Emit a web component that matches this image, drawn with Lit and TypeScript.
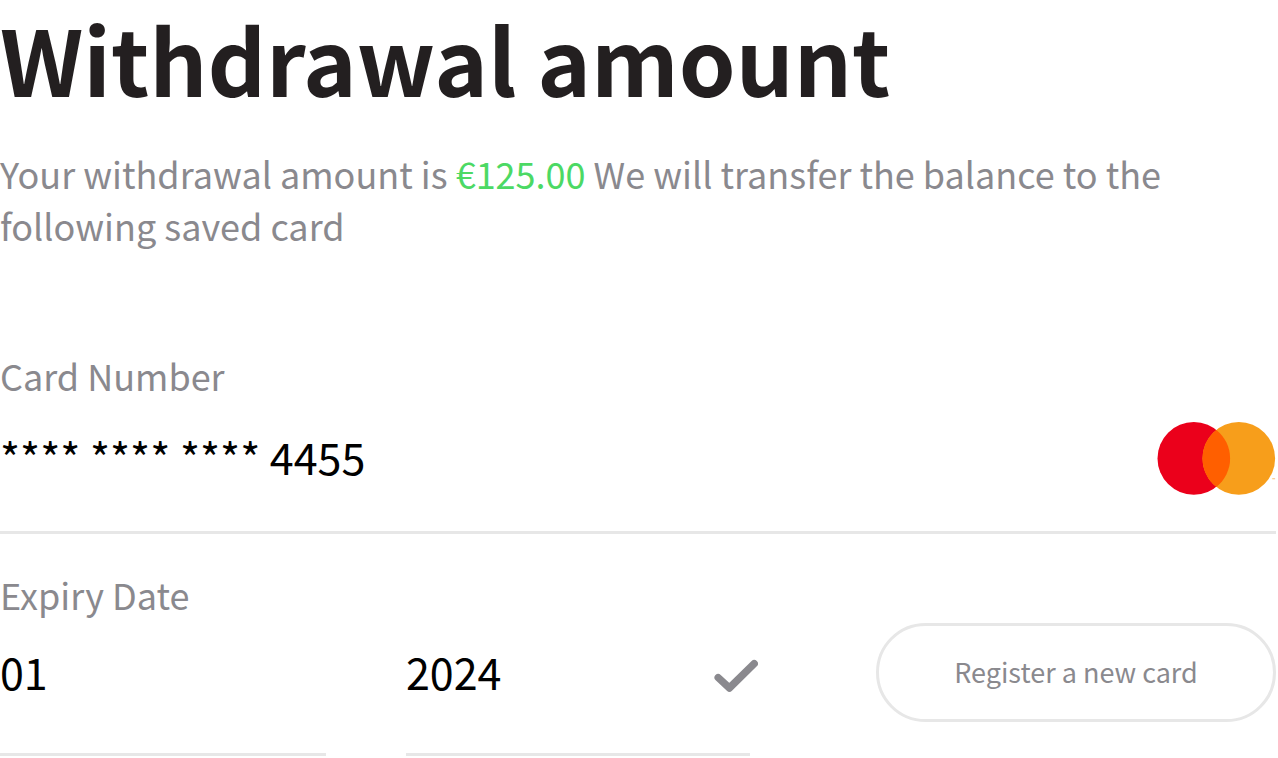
import { LitElement, html, css } from "lit";
import { customElement } from "lit/decorators.js";

@customElement("app-root")
export class AppRoot extends LitElement {
  static styles = css`
    :host {
      display: block;
      box-sizing: border-box;
      padding-right: 2px;
      background: #fff;
      color: #000;
      font-family: "Noto Sans CJK SC", "Noto Sans", sans-serif;
    }
    * { box-sizing: border-box; }
    h1 { margin: 0; font-size: 91px; line-height: 114px; font-weight: 700; color: #231f20; }
    p { margin: 33px 0 0; font-size: 36px; line-height: 52px; color: #8a898e; }
    .amount { color: #4cd964; }
    .label { display: block; font-size: 36px; line-height: 52px; color: #8a898e; }
    .row { display: flex; align-items: center; border-bottom: 3px solid #e7e7e7; }
    input {
      display: block;
      flex: 1;
      min-width: 0;
      height: 64px;
      margin: 0;
      padding: 0;
      border: 0;
      outline: 0;
      background: none;
      color: inherit;
      font-family: inherit;
      font-size: 43px;
      line-height: 64px;
    }
    .number { margin-top: 98px; }
    .number .row { height: 133px; padding-bottom: 20px; }
    .logo { flex: none; width: 120px; height: 80px; }
    .mark { font-size: 4px; fill: #f79e1b; }
    .bottom { display: flex; align-items: flex-start; gap: 126px; margin-top: 34px; }
    .expiry { flex: 1; min-width: 0; }
    .fields { display: grid; grid-template-columns: minmax(0, 326fr) minmax(0, 344fr); gap: 80px; }
    .field { height: 136px; padding-bottom: 31px; }
    .check { flex: none; width: 44px; height: 44px; margin-right: -8px; }
    button {
      flex: none;
      margin: 55px 0 0;
      padding: 0 0 2px;
      width: 400px;
      height: 99px;
      border: 3px solid #e7e7e7;
      border-radius: 50px;
      background: #fff;
      color: #8a898e;
      font-family: inherit;
      font-size: 27px;
      line-height: 40px;
    }
  `;

  render() {
    return html`
      <main>
        <h1>Withdrawal amount</h1>
        <p>Your withdrawal amount is <span class="amount">€125.00</span> We will transfer the balance to the following saved card</p>
        <div class="number">
          <label class="label" for="card">Card Number</label>
          <div class="row">
            <input id="card" value="**** **** **** 4455" readonly />
            <svg class="logo" viewBox="0 0 120 80" role="img" aria-label="Mastercard">
              <circle cx="37.8" cy="42.4" r="36.3" fill="#eb001b" />
              <circle cx="82.8" cy="42.4" r="36.3" fill="#f79e1b" />
              <path d="M60.3 13.9A36.3 36.3 0 0 1 60.3 70.9A36.3 36.3 0 0 1 60.3 13.9Z" fill="#ff5f00" />
              <text class="mark" x="119" y="65" text-anchor="end">™</text>
            </svg>
          </div>
        </div>
        <div class="bottom">
          <div class="expiry">
            <label class="label" for="month">Expiry Date</label>
            <div class="fields">
              <div class="row field"><input id="month" value="01" readonly /></div>
              <div class="row field">
                <input aria-label="Expiry year" value="2024" readonly />
                <svg class="check" viewBox="0 0 44 44" aria-hidden="true">
                  <path d="M4.2 28.6L15.4 39L40.2 14.6" fill="none" stroke="#8a898e" stroke-width="7.4" stroke-linecap="round" stroke-linejoin="round" />
                </svg>
              </div>
            </div>
          </div>
          <button type="button">Register a new card</button>
        </div>
      </main>
    `;
  }
}
